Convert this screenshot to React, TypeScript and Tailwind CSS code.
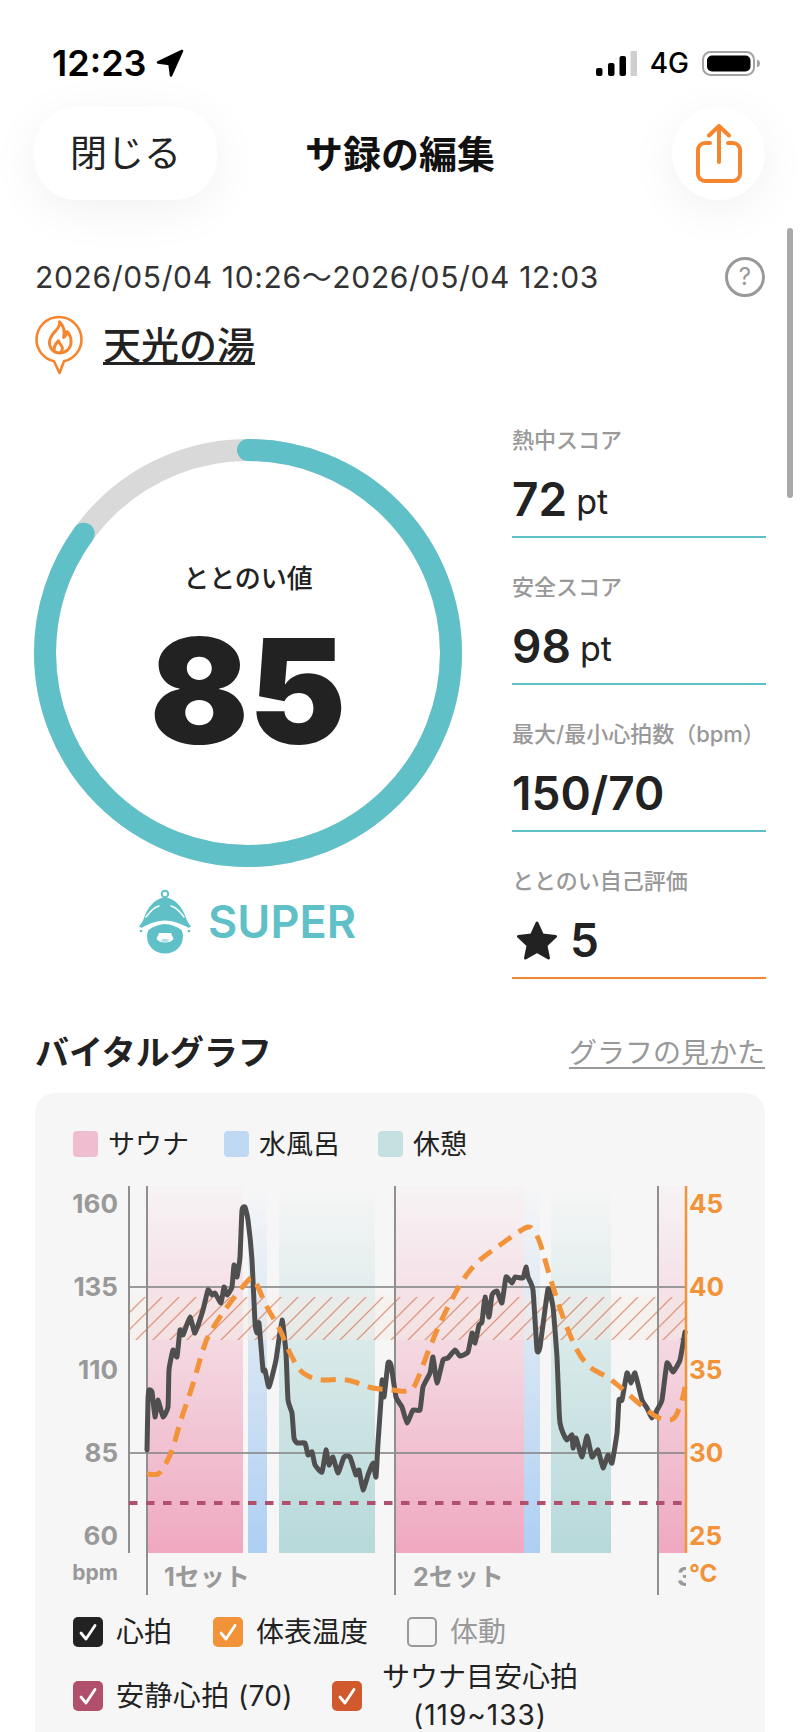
import React from "react";

type P = [number, number];

const HR: P[] = [
  [147,1450],[148,1400],[149,1390],[152,1392],[155,1417],[158,1400],[163,1417],[168,1407],[169,1370],[173,1350],[177,1357],[180,1330],[183,1335],[190,1317],[195,1333],[203,1310],[208,1290],[212,1295],[215,1293],[221,1303],[224,1287],[227,1295],[232,1287],[234,1265],[237,1277],[240,1257],[242,1210],[245,1207],[248,1220],[252,1260],[255,1323],[257,1333],[259,1323],[263,1370],[265,1370],[269,1387],[276,1360],[282,1320],[286,1353],[288,1400],[292,1413],[294,1438],[297,1443],[305,1443],[308,1455],[312,1452],[315,1465],[322,1472],[326,1450],[329,1465],[333,1457],[338,1473],[344,1457],[350,1457],[356,1475],[359,1470],[363,1490],[368,1475],[373,1463],[376,1477],[378,1443],[381,1400],[382,1380],[384,1397],[388,1363],[391,1365],[396,1397],[402,1407],[407,1423],[413,1410],[420,1410],[423,1387],[430,1373],[433,1357],[437,1383],[443,1360],[448,1358],[455,1350],[460,1356],[468,1352],[472,1333],[475,1343],[479,1325],[482,1322],[485,1297],[489,1317],[492,1295],[497,1291],[502,1303],[506,1277],[512,1283],[515,1277],[523,1278],[526,1267],[528,1277],[533,1290],[537,1350],[540,1347],[548,1289],[553,1307],[557,1357],[559,1408],[560,1423],[563,1433],[567,1440],[572,1435],[573,1448],[576,1438],[582,1457],[587,1436],[592,1457],[598,1450],[603,1468],[608,1455],[612,1463],[617,1433],[619,1400],[622,1400],[627,1373],[631,1383],[635,1373],[642,1400],[647,1408],[652,1418],[657,1410],[662,1400],[667,1363],[673,1372],[680,1360],[685,1332],
];

const TEMP: P[] = [
  [147,1474],[158,1474],[165,1465],[172,1450],[181,1420],[192,1387],[203,1350],[210,1333],[227,1307],[245,1284],[252,1278],[257,1285],[267,1307],[280,1330],[290,1353],[300,1370],[310,1377],[323,1380],[347,1380],[373,1388],[393,1390],[407,1391],[415,1385],[430,1347],[443,1317],[457,1290],[468,1273],[480,1260],[500,1245],[517,1233],[528,1227],[533,1230],[540,1243],[550,1277],[563,1317],[577,1350],[590,1367],[607,1377],[620,1387],[635,1400],[647,1410],[657,1417],[667,1420],[675,1417],[682,1400],[685,1387],
];

function smooth(pts: P[], t = 6): string {
  let d = `M${pts[0][0]} ${pts[0][1]}`;
  for (let i = 0; i < pts.length - 1; i++) {
    const p0 = pts[Math.max(i - 1, 0)];
    const p1 = pts[i];
    const p2 = pts[i + 1];
    const p3 = pts[Math.min(i + 2, pts.length - 1)];
    const c1x = p1[0] + (p2[0] - p0[0]) / t;
    const c1y = p1[1] + (p2[1] - p0[1]) / t;
    const c2x = p2[0] - (p3[0] - p1[0]) / t;
    const c2y = p2[1] - (p3[1] - p1[1]) / t;
    d += ` C${c1x} ${c1y} ${c2x} ${c2y} ${p2[0]} ${p2[1]}`;
  }
  return d;
}

function Chart() {
  const bands: [number, number, string][] = [
    [148, 243, "url(#pink)"],
    [248, 267, "url(#blue)"],
    [279, 375, "url(#green)"],
    [396, 524, "url(#pink)"],
    [524, 540, "url(#blue)"],
    [551, 611, "url(#green)"],
    [659, 686, "url(#pink)"],
  ];
  const left: [string, number][] = [["160",1204],["135",1287],["110",1370],["85",1453],["60",1536]];
  const right: [string, number][] = [["45",1204],["40",1287],["35",1370],["30",1453],["25",1536]];
  return (
    <svg viewBox="35 1170 730 430" className="block w-[730px] h-[430px] font-['Inter','Noto_Sans_CJK_JP',sans-serif]">
      <defs>
        <linearGradient id="pink" gradientUnits="userSpaceOnUse" x1="0" y1="1186" x2="0" y2="1553">
          <stop offset="0" stopColor="#f7f3f4" />
          <stop offset="0.5" stopColor="#f3d3de" />
          <stop offset="1" stopColor="#efa8c0" />
        </linearGradient>
        <linearGradient id="blue" gradientUnits="userSpaceOnUse" x1="0" y1="1186" x2="0" y2="1553">
          <stop offset="0" stopColor="#f6f6f7" />
          <stop offset="0.5" stopColor="#d3e3f3" />
          <stop offset="1" stopColor="#aecff3" />
        </linearGradient>
        <linearGradient id="green" gradientUnits="userSpaceOnUse" x1="0" y1="1186" x2="0" y2="1553">
          <stop offset="0" stopColor="#f6f6f6" />
          <stop offset="0.5" stopColor="#d5e7e7" />
          <stop offset="1" stopColor="#b7d9da" />
        </linearGradient>
        <linearGradient id="veil" gradientUnits="userSpaceOnUse" x1="0" y1="1292" x2="0" y2="1340">
          <stop offset="0" stopColor="#f4ebe4" stopOpacity="0.1" />
          <stop offset="0.25" stopColor="#f4ebe4" stopOpacity="0.45" />
          <stop offset="1" stopColor="#f4ebe4" stopOpacity="0.45" />
        </linearGradient>
        <pattern id="hatch" patternUnits="userSpaceOnUse" width="17" height="17" x="129" y="1296">
          <path d="M-2 19L19 -2M-2 2L2 -2M15 19L19 15" stroke="#d2562e" strokeOpacity="0.55" strokeWidth="1.3" fill="none" />
        </pattern>
        <clipPath id="third"><rect x="660" y="1555" width="26" height="40" /></clipPath>
      </defs>

      {bands.map(([a, b, f]) => (
        <rect key={a} x={a} y={1186} width={b - a} height={367} fill={f} />
      ))}

      <rect x="129" y="1292" width="557" height="48" fill="url(#veil)" />
      <rect x="129" y="1297" width="557" height="43" fill="url(#hatch)" />

      <path d="M129 1287H686M129 1453H686" stroke="#8c8c8c" strokeWidth="2" opacity="0.85" />
      <path d="M129 1186V1553" stroke="#8f8f8f" strokeWidth="2" />
      <path d="M147 1186V1595M395 1186V1595M658 1186V1595" stroke="#8f8f8f" strokeWidth="2" />
      <path d="M129 1503H686" stroke="#b0506c" strokeWidth="4" strokeDasharray="8.5 8.5" />

      <path d={smooth(HR, 14)} fill="none" stroke="#4f4f4f" strokeWidth="5" strokeLinejoin="round" strokeLinecap="round" />
      <path d={smooth(TEMP)} fill="none" stroke="#f29239" strokeWidth="5" strokeDasharray="15 9" />

      <path d="M686 1186V1553" stroke="#f29239" strokeWidth="2.5" />

      {left.map(([t, y]) => (
        <text key={t} x="118" y={y} dy="0.36em" textAnchor="end" fontSize="26" fontWeight="700" fill="#999999">{t}</text>
      ))}
      {right.map(([t, y]) => (
        <text key={t} x="689" y={y} dy="0.36em" fontSize="26" fontWeight="700" fill="#f29239">{t}</text>
      ))}
      <text x="118" y="1572" dy="0.36em" textAnchor="end" fontSize="21" fontWeight="700" fill="#999999">bpm</text>
      <text x="689" y="1573" dy="0.36em" fontSize="24" fontWeight="700" fill="#f29239">°C</text>
      <text x="164" y="1577" dy="0.36em" fontSize="25" fontWeight="700" fill="#999999">1セット</text>
      <text x="413" y="1577" dy="0.36em" fontSize="25" fontWeight="700" fill="#999999">2セット</text>
      <text x="677" y="1577" dy="0.36em" fontSize="25" fontWeight="700" fill="#999999" clipPath="url(#third)">3</text>
    </svg>
  );
}

function Stat({ label, line, children }: { label: string; line: string; children: React.ReactNode }) {
  return (
    <div className={`h-[113px] border-b-2 ${line}`}>
      <div className="h-[30px] flex items-center text-[22px] font-medium text-[#999999] whitespace-nowrap">{label}</div>
      <div className="mt-[14px] h-[60px] flex items-center text-[#222222] font-semibold text-[46px] leading-none whitespace-nowrap">
        {children}
      </div>
    </div>
  );
}

function Check({ color, label, muted, wide }: { color?: string; label: string; muted?: boolean; wide?: boolean }) {
  return (
    <div className="flex items-center gap-[13px]">
      <Box color={color} />
      <span className={`text-[28px] leading-none whitespace-nowrap ${wide ? "tracking-[0.4px]" : ""} ${muted ? "text-[#999999]" : "text-[#222222]"}`}>{label}</span>
    </div>
  );
}

function Box({ color }: { color?: string }) {
  if (!color) {
    return <div className="w-[30px] h-[30px] rounded-[5px] border-2 border-[#999999]" />;
  }
  return (
    <div className={`w-[30px] h-[30px] rounded-[5px] flex items-center justify-center ${color}`}>
      <svg viewBox="0 0 30 30" className="w-[30px] h-[30px]" fill="none">
        <path d="M8 16l5 6L22 8.5" stroke="#ffffff" strokeWidth="2.8" strokeLinecap="round" strokeLinejoin="round" />
      </svg>
    </div>
  );
}

export default function App() {
  return (
    <div className="h-[1732px] w-[800px] overflow-hidden relative bg-white text-[#222222] font-['Inter','Noto_Sans_CJK_JP',sans-serif]">
      {/* scrollbar */}
      <div className="absolute left-[787px] top-[228px] w-[6px] h-[270px] rounded-full bg-[#a9a9a9]" />

      {/* status bar */}
      <div className="h-[107px] pt-[36px]">
        <div className="h-[54px] flex items-center justify-between pl-[52px] pr-[40px]">
          <div className="flex items-center gap-[10px]">
            <span className="font-semibold text-[36px] leading-none text-black">12:23</span>
            <svg viewBox="0 0 28 28" className="w-[28px] h-[28px]" fill="#000000">
              <path d="M26 2L2 13.5 13.5 15 15 26.5z" stroke="#000000" strokeWidth="2.5" strokeLinejoin="round" />
            </svg>
          </div>
          <div className="flex items-center">
            <svg viewBox="0 0 41 25" className="w-[41px] h-[25px]">
              <rect x="0" y="17" width="6.5" height="8" rx="2" fill="#000000" />
              <rect x="12" y="12" width="6.5" height="13" rx="2" fill="#000000" />
              <rect x="23.5" y="5" width="6.5" height="20" rx="2" fill="#000000" />
              <rect x="34.5" y="0" width="6.5" height="25" rx="1" fill="#cfcfcf" />
            </svg>
            <span className="ml-[13px] font-medium text-[28px] leading-none text-black">4G</span>
            <svg viewBox="0 0 58 25" className="ml-[13px] w-[58px] h-[25px]">
              <rect x="1" y="1" width="51" height="23" rx="7.5" fill="none" stroke="#a3a3a3" strokeWidth="2" />
              <rect x="5" y="4.5" width="43.5" height="16" rx="5" fill="#000000" />
              <path d="M55 8.5c2 .7 3 2.2 3 4s-1 3.3-3 4z" fill="#a3a3a3" />
            </svg>
          </div>
        </div>
      </div>

      {/* nav */}
      <div className="h-[93px] px-[35px] flex items-center">
        <div className="flex-1">
          <div className="-ml-px w-[183px] h-[93px] rounded-[42px] bg-white shadow-[0_10px_50px_rgba(0,0,0,0.06)] flex items-center justify-center text-[37px] leading-none">
            閉じる
          </div>
        </div>
        <div className="text-[38px] font-bold leading-none text-[#111111]">サ録の編集</div>
        <div className="flex-1 flex justify-end">
          <div className="w-[93px] h-[93px] rounded-full bg-white shadow-[0_10px_50px_rgba(0,0,0,0.06)] flex items-center justify-center">
            <svg viewBox="0 0 46 60" className="w-[46px] h-[60px]" fill="none" stroke="#f5862f" strokeWidth="4" strokeLinecap="round" strokeLinejoin="round">
              <path d="M23 38V3M13 11.5L23 2l10 9.5" />
              <path d="M14 19H9a7 7 0 0 0-7 7v24a7 7 0 0 0 7 7h28a7 7 0 0 0 7-7V26a7 7 0 0 0-7-7h-5" />
            </svg>
          </div>
        </div>
      </div>

      <div className="px-[35px]">
        {/* date */}
        <div className="mt-[57px] h-[40px] flex items-center justify-between">
          <span className="text-[30px] leading-none whitespace-nowrap tracking-[0.65px] text-[#333333]">2026/05/04 10:26～2026/05/04 12:03</span>
          <div className="w-[40px] h-[40px] rounded-full border-[3px] border-[#999999] flex items-center justify-center text-[24px] leading-none text-[#999999]">?</div>
        </div>

        {/* location */}
        <div className="mt-[18px] h-[60px] flex items-start gap-[20px]">
          <svg viewBox="0 0 48 60" className="w-[48px] h-[60px]" fill="none" stroke="#f5862f" strokeWidth="2.6" strokeLinejoin="round" strokeLinecap="round">
            <path d="M19 46.2C9 44 1.5 35 1.5 24.5a22.5 22.5 0 1 1 45 0C46.5 35 39 44 29 46.2L24.5 58z" />
            <g transform="translate(24 23) scale(1.15) translate(-24 -23)">
              <path d="M24.5 9c1 5-3.500 7-6.500 11.500-3 4.500-3 8-1 11.500 1.500 2.500 4 4 7 4 5.500 0 10.500-3.500 10.500-10 0-4-2-7-3.500-8.500-.3 2.500-1.500 4-3 5C29.500 17 27.500 12 24.500 9z" />
              <path d="M20 34c-1-3 1-6 3.500-8.500 .5 2.500 3.500 4 3.500 6.500 0 1.200-.5 2.500-1.500 3.500" />
            </g>
          </svg>
          <span className="mt-[8px] text-[38px] leading-[44px] font-medium underline underline-offset-[3px] decoration-[3px] whitespace-nowrap">天光の湯</span>
        </div>

        {/* score */}
        <div className="mt-[50px] flex items-start">
          <div className="pt-[14px] -ml-px w-[428px]">
            <div className="relative w-[428px] h-[428px]">
              <svg viewBox="0 0 428 428" className="w-[428px] h-[428px]" fill="none">
                <circle cx="214" cy="214" r="203" stroke="#d9d9d9" strokeWidth="22" />
                <circle cx="214" cy="214" r="203" stroke="#5fc0c8" strokeWidth="22" strokeLinecap="round" pathLength="100" strokeDasharray="85 100" transform="rotate(-90 214 214)" />
              </svg>
              <div className="absolute inset-0 flex flex-col items-center text-[#222222]">
                <div className="mt-[125px] h-[30px] flex items-center text-[26px] font-medium leading-none">ととのい値</div>
                <div className="mt-[24px] h-[146px] flex items-center font-black text-[146px] leading-none">85</div>
              </div>
            </div>
            <div className="mt-[17px] flex items-center h-[75px] gap-[8px] pl-[96px]">
              <svg viewBox="0 0 70 75" className="w-[70px] h-[75px]">
                <circle cx="35" cy="10" r="3.200" fill="none" stroke="#5fc0c8" strokeWidth="2" />
                <path d="M35 13.500C25 14 17 24 14 34c-1 3-3 6-5 8.500 1 1 2 1.500 3 1 8-4 15-7 23-7s15 3 23 7c1 .5 2 0 3-1-2-2.500-4-5.500-5-8.500C53 24 45 14 35 13.500z" fill="#5fc0c8" />
                <path d="M16 33c5-7 9-10 13-11M54 33c-5-7-9-10-13-11" stroke="#ffffff" strokeWidth="1.500" fill="none" strokeLinecap="round" />
                <path d="M18.500 46c5-3.500 11-6 16.500-6s11.500 2.500 16.500 6c1 2 1.500 4 1.500 6 0 10.500-8 17.500-18 17.500S17 62.500 17 52c0-2 .5-4 1.500-6z" fill="#5fc0c8" />
                <path d="M29 49h12l2.500 6c-2 2.500-4.500 3.500-8.500 3.500s-6.500-1-8.500-3.500z" fill="#ffffff" />
                <path d="M30.500 56.500c1.500-1.200 3-1.500 4.500-1.500s3 .3 4.500 1.500c-1.500 1-3 1.500-4.500 1.500s-3-.5-4.500-1.500z" fill="#5fc0c8" opacity="0.5" />
                <circle cx="11" cy="47" r="1.300" fill="#5fc0c8" />
                <circle cx="59" cy="47" r="1.300" fill="#5fc0c8" />
              </svg>
              <span className="font-semibold text-[45px] leading-none text-[#5fc0c8]">SUPER</span>
            </div>
          </div>

          <div className="ml-auto -mr-px w-[254px] flex flex-col gap-[34px]">
            <Stat label="熱中スコア" line="border-[#5fc0c8]">
              72<span className="ml-[9px] mt-[6px] text-[34px] font-normal">pt</span>
            </Stat>
            <Stat label="安全スコア" line="border-[#5fc0c8]">
              98<span className="ml-[9px] mt-[6px] text-[34px] font-normal">pt</span>
            </Stat>
            <Stat label="最大/最小心拍数（bpm）" line="border-[#5fc0c8]">
              150/70
            </Stat>
            <Stat label="ととのい自己評価" line="border-[#f5862f]">
              <svg viewBox="0 0 42 40" className="w-[42px] h-[40px] ml-[4px] mr-[12px]" fill="#222222" stroke="#222222" strokeWidth="3" strokeLinejoin="round">
                <path d="M21 3l5.500 12 13 1.500-9.600 8.900L32.500 38 21 31.500 9.500 38l2.600-12.600L2.500 16.500l13-1.500z" />
              </svg>
              5
            </Stat>
          </div>
        </div>

        {/* graph heading */}
        <div className="mt-[49px] h-[50px] flex items-center justify-between">
          <span className="text-[34px] font-bold leading-none">バイタルグラフ</span>
          <span className="text-[28px] leading-none text-[#999999] underline underline-offset-[4px]">グラフの見かた</span>
        </div>

        {/* card */}
        <div className="mt-[15px] h-[700px] rounded-[20px] bg-[#f6f6f6] pt-[38px]">
          <div className="px-[38px] h-[26px] flex items-center text-[27px] leading-none">
            <div className="w-[25px] h-[26px] rounded-[4px] bg-[#f0bccf]" />
            <span className="ml-[10px]">サウナ</span>
            <div className="ml-[35px] w-[25px] h-[26px] rounded-[4px] bg-[#bfd9f5]" />
            <span className="ml-[10px]">水風呂</span>
            <div className="ml-[38px] w-[25px] h-[26px] rounded-[4px] bg-[#c5e0e0]" />
            <span className="ml-[10px]">休憩</span>
          </div>
          <div className="mt-[13px]">
            <Chart />
          </div>
          <div className="mt-[17px] px-[38px] flex items-center gap-[41px]">
            <Check color="bg-[#222222]" label="心拍" />
            <Check color="bg-[#f29239]" label="体表温度" />
            <div className="-ml-[2px]">
              <Check label="体動" muted />
            </div>
          </div>
          <div className="mt-[11px] px-[38px] flex items-center gap-[39px]">
            <Check color="bg-[#b0506c]" label="安静心拍 (70)" wide />
            <div className="flex items-center gap-[20px]">
              <Box color="bg-[#d05a2e]" />
              <div className="text-center text-[28px] leading-[38px]">
                サウナ目安心拍<br />
                <span className="tracking-[1px]">(119~133)</span>
              </div>
            </div>
          </div>
        </div>
      </div>
    </div>
  );
}
